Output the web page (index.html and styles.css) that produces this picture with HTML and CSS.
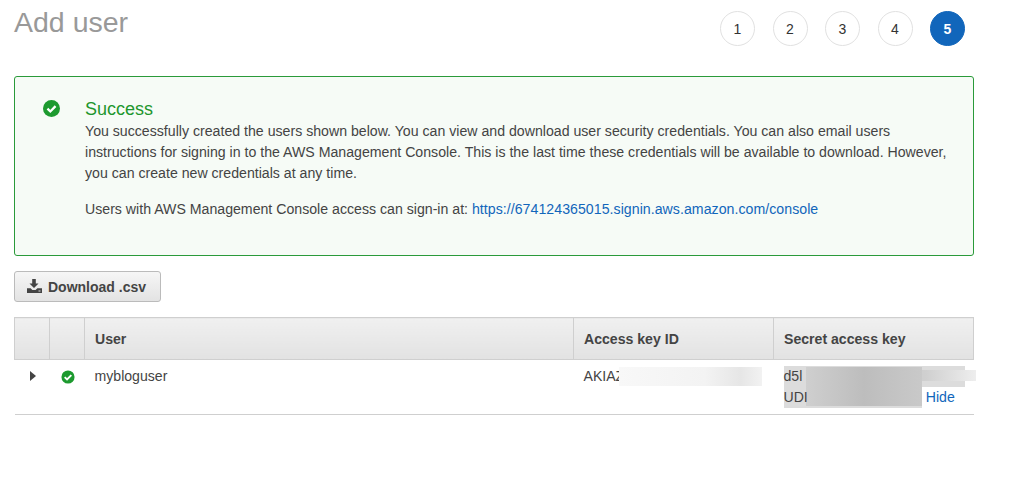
FILE: index.html
```html
<!DOCTYPE html>
<html lang="en">
<head>
<meta charset="utf-8">
<title>Add user</title>
<link rel="stylesheet" href="styles.css">
</head>
<body>
<main class="page">
  <header class="top">
    <h1 class="title">Add user</h1>
    <ol class="steps">
      <li class="step">1</li>
      <li class="step">2</li>
      <li class="step">3</li>
      <li class="step">4</li>
      <li class="step step-active">5</li>
    </ol>
  </header>
  <section class="alert">
    <svg class="alert-icon" viewBox="0 0 16 16"><circle cx="8" cy="8" r="8" fill="#1d9a2f"/><path d="M4.2 8.2l2.7 2.6 4.9-5" fill="none" stroke="#fff" stroke-width="2.2"/></svg>
    <div class="alert-body">
      <h2 class="alert-title">Success</h2>
      <p class="alert-text">You successfully created the users shown below. You can view and download user security credentials. You can also email users instructions for signing in to the AWS Management Console. This is the last time these credentials will be available to download. However, you can create new credentials at any time.</p>
      <p class="alert-signin">Users with AWS Management Console access can sign-in at: <a class="link signin-link" href="#">https://674124365015.signin.aws.amazon.com/console</a></p>
    </div>
  </section>
  <button class="btn" type="button">
    <svg class="btn-icon" viewBox="0 0 15 14"><path d="M5.2 0h3.6v4.5h2.7L7 9 2.5 4.5h2.7z" fill="#444"/><path d="M0 9.2h3.6L5.4 11h3.2l1.8-1.8H15V14H0z" fill="#444"/><path d="M11.5 11.5h2v1h-2z" fill="#ddd"/></svg>
    Download .csv
  </button>
  <table class="table">
    <thead>
      <tr>
        <th class="col-narrow"></th>
        <th class="col-narrow"></th>
        <th class="col-user">User</th>
        <th class="col-key">Access key ID</th>
        <th class="col-secret">Secret access key</th>
      </tr>
    </thead>
    <tbody>
      <tr>
        <td class="cell-icon"><span class="caret"></span></td>
        <td class="cell-icon"><svg class="row-check" viewBox="0 0 16 16"><circle cx="8" cy="8" r="7.5" fill="#1d9a2f"/><path d="M4.2 8.2l2.7 2.6 4.9-5" fill="none" stroke="#fff" stroke-width="2.2"/></svg></td>
        <td>mybloguser</td>
        <td><span class="redact-wrap">AKIAZ<span class="blur blur-key"></span></span></td>
        <td>
          <div class="secret">
            <span class="blur blur-s1"></span>
            <span class="blur blur-s2"></span>
            <span class="blur blur-s3"></span>
            <span class="secret-line">d5l</span>
            <span class="secret-line">UDI<a class="link hide" href="#">Hide</a></span>
          </div>
        </td>
      </tr>
    </tbody>
  </table>
</main>
</body>
</html>
```
FILE: styles.css
```css
* { box-sizing: border-box; }
html, body { margin: 0; padding: 0; background: #fff; }
body { font-family: "Liberation Sans", Arial, sans-serif; font-size: 14px; color: #444; }
.page { width: 974px; padding: 0 0 0 14px; }
.top { display: flex; justify-content: space-between; height: 76px; padding-top: 4px; }
.title { margin: 0; font-size: 28.5px; line-height: 36px; font-weight: 400; color: #999; }
.steps { display: flex; list-style: none; margin: 7px 9px 0 0; padding: 0; gap: 17.5px; height: 35px; }
.step { width: 35px; height: 35px; border: 1px solid #e1e1e1; border-radius: 50%; display: flex; align-items: center; justify-content: center; font-size: 14px; color: #333; background: #fff; }
.step-active { background: #1166bb; border-color: #1166bb; color: #fff; font-weight: 700; }
.alert { display: flex; height: 180px; border: 1px solid #2a9a3a; border-radius: 3px; background: #f6fbf6; padding: 22px 20px 0 28px; }
.alert-icon { width: 17px; height: 17px; flex: none; margin-top: 1px; }
.alert-body { margin-left: 25px; flex: 1; font-size: 14.15px; }
.alert-title { margin: 0; font-size: 18px; line-height: 20px; font-weight: 400; color: #1d962d; }
.alert-text { margin: 2px 0 0; line-height: 21px; }
.alert-signin { margin: 15px 0 0; line-height: 21px; }
.link { color: #1166bb; text-decoration: none; }
.signin-link { letter-spacing: 0.04px; }
.btn { display: flex; align-items: center; gap: 6px; margin-top: 15px; width: 147px; height: 31px; padding: 0 0 0 12px; border: 1px solid #bbb; border-radius: 3px; background: linear-gradient(#f6f6f6, #e3e3e3); font: 700 14px "Liberation Sans", Arial, sans-serif; color: #444; }
.btn-icon { width: 15px; height: 14px; margin-top: -2px; }
.table { width: 959px; margin-top: 15px; border-collapse: collapse; table-layout: fixed; font-size: 14.1px; }
.table th { height: 42px; padding: 0 10px; text-align: left; font-size: 14.1px; font-weight: 700; color: #444; background: linear-gradient(#f0f0f0, #e2e2e2); border: 1px solid #cfcfcf; border-left-width: 0; }
.table th:first-child { border-left-width: 1px; }
.col-narrow { width: 35px; }
.col-user { width: 489px; }
.col-key { width: 200px; }
.col-secret { width: 200px; }
.table td { height: 55px; padding: 6px 10px 0; vertical-align: top; line-height: 20px; border-bottom: 1px solid #cfcfcf; color: #444; }
.table td.cell-icon { padding: 6px 0 0; text-align: center; }
.caret { display: inline-block; margin: 5px 0 0 2px; border-left: 6px solid #444; border-top: 5px solid transparent; border-bottom: 5px solid transparent; }
.row-check { display: inline-block; width: 14px; height: 14px; margin: 4px 0 0 2px; }
.redact-wrap { position: relative; display: block; }
.blur { position: absolute; display: block; }
.blur-key { left: 35px; top: 1px; width: 143px; height: 19px; background: linear-gradient(90deg, #f8f8f8, #f3f3f3 60%, #e6e6e6 85%, #f2f2f2); }
.secret { position: relative; }
.secret-line { position: relative; display: block; line-height: 21px; }
.blur-s1 { left: 0; top: 0; width: 181px; height: 21px; background: #dcdcdc; }
.blur-s2 { left: 0; top: 21px; width: 138px; height: 21px; background: #dcdcdc; }
.blur-s3 { left: 22px; top: 1px; width: 116px; height: 39px; background: linear-gradient(90deg, #cfcfcf, #bdbdbd 50%, #c9c9c9); }
.blur-s1::after { content: ""; position: absolute; left: 22px; top: 4px; width: 170px; height: 11px; background: linear-gradient(90deg, #cdcdcd, #cfcfcf 70%, #eeeeee); }
.hide { margin-left: 118px; }
```
